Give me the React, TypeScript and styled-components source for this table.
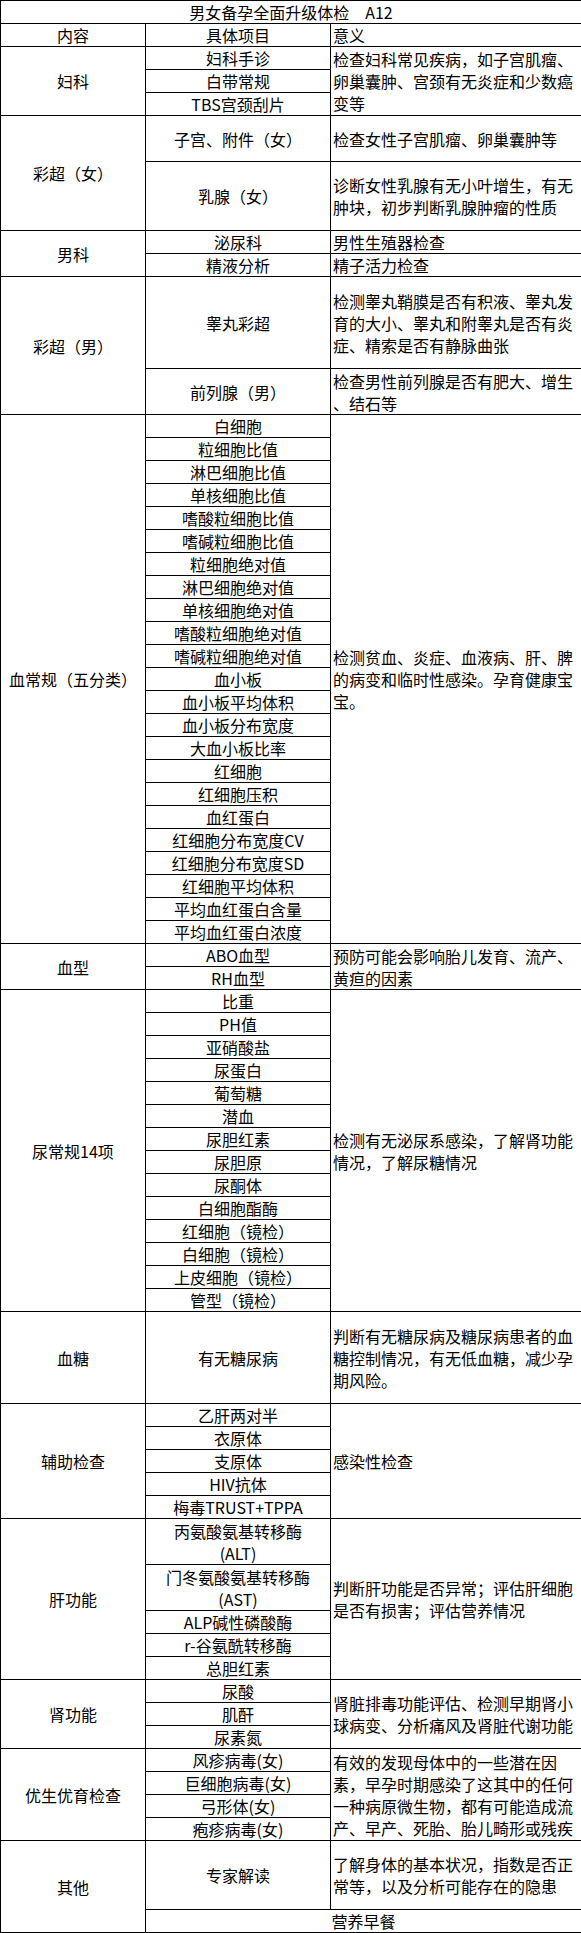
import React from "react";
import styled, { createGlobalStyle } from "styled-components";

const Global = createGlobalStyle`
  html, body { margin: 0; padding: 0; background: #fff; }
  body { font-family: "Noto Sans CJK SC", "Noto Sans", sans-serif; color: #000; }
`;

const Table = styled.table`
  width: 581px;
  border-collapse: collapse;
  table-layout: fixed;
  font-family: "Noto Sans CJK SC", "Noto Sans", sans-serif;
  font-size: 16px;
  line-height: 22px;
  color: #000;
`;

const Col = styled.col<{ $w: number }>`
  width: ${(p) => p.$w}px;
`;

const Row = styled.tr<{ $u?: number }>`
  height: ${(p) => (p.$u ?? 1) * 23}px;
`;

const Cell = styled.td`
  border: 1px solid #000;
  padding: 0 1px;
  text-align: center;
  vertical-align: middle;
  white-space: nowrap;
  overflow: hidden;
`;

const Desc = styled(Cell)`
  text-align: left;
  padding: 0 0 0 2px;
`;

const Line = styled.span`
  display: block;
`;

type Item = { name: string[]; u?: number; desc?: string[]; wide?: boolean };
type Section = { label: string; items: Item[]; desc?: string[] };

const one = (names: string[]): Item[] => names.map((n) => ({ name: [n] }));

const sections: Section[] = [
  {
    label: "妇科",
    items: one(["妇科手诊", "白带常规", "TBS宫颈刮片"]),
    desc: ["检查妇科常见疾病，如子宫肌瘤、", "卵巢囊肿、宫颈有无炎症和少数癌", "变等"],
  },
  {
    label: "彩超（女）",
    items: [
      { name: ["子宫、附件（女）"], u: 2, desc: ["检查女性子宫肌瘤、卵巢囊肿等"] },
      { name: ["乳腺（女）"], u: 3, desc: ["诊断女性乳腺有无小叶增生，有无", "肿块，初步判断乳腺肿瘤的性质"] },
    ],
  },
  {
    label: "男科",
    items: [
      { name: ["泌尿科"], desc: ["男性生殖器检查"] },
      { name: ["精液分析"], desc: ["精子活力检查"] },
    ],
  },
  {
    label: "彩超（男）",
    items: [
      {
        name: ["睾丸彩超"],
        u: 4,
        desc: ["检测睾丸鞘膜是否有积液、睾丸发", "育的大小、睾丸和附睾丸是否有炎", "症、精索是否有静脉曲张"],
      },
      { name: ["前列腺（男）"], u: 2, desc: ["检查男性前列腺是否有肥大、增生", "、结石等"] },
    ],
  },
  {
    label: "血常规（五分类）",
    items: one([
      "白细胞",
      "粒细胞比值",
      "淋巴细胞比值",
      "单核细胞比值",
      "嗜酸粒细胞比值",
      "嗜碱粒细胞比值",
      "粒细胞绝对值",
      "淋巴细胞绝对值",
      "单核细胞绝对值",
      "嗜酸粒细胞绝对值",
      "嗜碱粒细胞绝对值",
      "血小板",
      "血小板平均体积",
      "血小板分布宽度",
      "大血小板比率",
      "红细胞",
      "红细胞压积",
      "血红蛋白",
      "红细胞分布宽度CV",
      "红细胞分布宽度SD",
      "红细胞平均体积",
      "平均血红蛋白含量",
      "平均血红蛋白浓度",
    ]),
    desc: ["检测贫血、炎症、血液病、肝、脾", "的病变和临时性感染。孕育健康宝", "宝。"],
  },
  {
    label: "血型",
    items: one(["ABO血型", "RH血型"]),
    desc: ["预防可能会影响胎儿发育、流产、", "黄疸的因素"],
  },
  {
    label: "尿常规14项",
    items: one([
      "比重",
      "PH值",
      "亚硝酸盐",
      "尿蛋白",
      "葡萄糖",
      "潜血",
      "尿胆红素",
      "尿胆原",
      "尿酮体",
      "白细胞酯酶",
      "红细胞（镜检）",
      "白细胞（镜检）",
      "上皮细胞（镜检）",
      "管型（镜检）",
    ]),
    desc: ["检测有无泌尿系感染，了解肾功能", "情况，了解尿糖情况"],
  },
  {
    label: "血糖",
    items: [
      {
        name: ["有无糖尿病"],
        u: 4,
        desc: ["判断有无糖尿病及糖尿病患者的血", "糖控制情况，有无低血糖，减少孕", "期风险。"],
      },
    ],
  },
  {
    label: "辅助检查",
    items: one(["乙肝两对半", "衣原体", "支原体", "HIV抗体", "梅毒TRUST+TPPA"]),
    desc: ["感染性检查"],
  },
  {
    label: "肝功能",
    items: [
      { name: ["丙氨酸氨基转移酶", "(ALT)"], u: 2 },
      { name: ["门冬氨酸氨基转移酶", "(AST)"], u: 2 },
      { name: ["ALP碱性磷酸酶"] },
      { name: ["r-谷氨酰转移酶"] },
      { name: ["总胆红素"] },
    ],
    desc: ["判断肝功能是否异常；评估肝细胞", "是否有损害；评估营养情况"],
  },
  {
    label: "肾功能",
    items: one(["尿酸", "肌酐", "尿素氮"]),
    desc: ["肾脏排毒功能评估、检测早期肾小", "球病变、分析痛风及肾脏代谢功能"],
  },
  {
    label: "优生优育检查",
    items: one(["风疹病毒(女)", "巨细胞病毒(女)", "弓形体(女)", "疱疹病毒(女)"]),
    desc: [
      "有效的发现母体中的一些潜在因",
      "素，早孕时期感染了这其中的任何",
      "一种病原微生物，都有可能造成流",
      "产、早产、死胎、胎儿畸形或残疾",
    ],
  },
  {
    label: "其他",
    items: [
      { name: ["专家解读"], u: 3, desc: ["了解身体的基本状况，指数是否正", "常等，以及分析可能存在的隐患"] },
      { name: ["营养早餐"], wide: true },
    ],
  },
];

const Lines: React.FC<{ text?: string[] }> = ({ text }) => (
  <>
    {(text ?? []).map((t, i) => (
      <Line key={i}>{t}</Line>
    ))}
  </>
);

export default function App() {
  return (
    <>
      <Global />
      <Table>
        <colgroup>
          <Col $w={145} />
          <Col $w={185} />
          <Col $w={251} />
        </colgroup>
        <tbody>
          <Row>
            <Cell colSpan={3}>男女备孕全面升级体检　A12</Cell>
          </Row>
          <Row>
            <Cell>内容</Cell>
            <Cell>具体项目</Cell>
            <Desc>意义</Desc>
          </Row>
          {sections.map((sec) =>
            sec.items.map((it, i) => (
              <Row key={sec.label + i} $u={it.u}>
                {i === 0 && <Cell rowSpan={sec.items.length}>{sec.label}</Cell>}
                {it.wide ? (
                  <Cell colSpan={2}>
                    <Lines text={it.name} />
                  </Cell>
                ) : (
                  <>
                    <Cell>
                      <Lines text={it.name} />
                    </Cell>
                    {sec.desc ? (
                      i === 0 && (
                        <Desc rowSpan={sec.items.length}>
                          <Lines text={sec.desc} />
                        </Desc>
                      )
                    ) : (
                      <Desc>
                        <Lines text={it.desc} />
                      </Desc>
                    )}
                  </>
                )}
              </Row>
            ))
          )}
        </tbody>
      </Table>
    </>
  );
}
